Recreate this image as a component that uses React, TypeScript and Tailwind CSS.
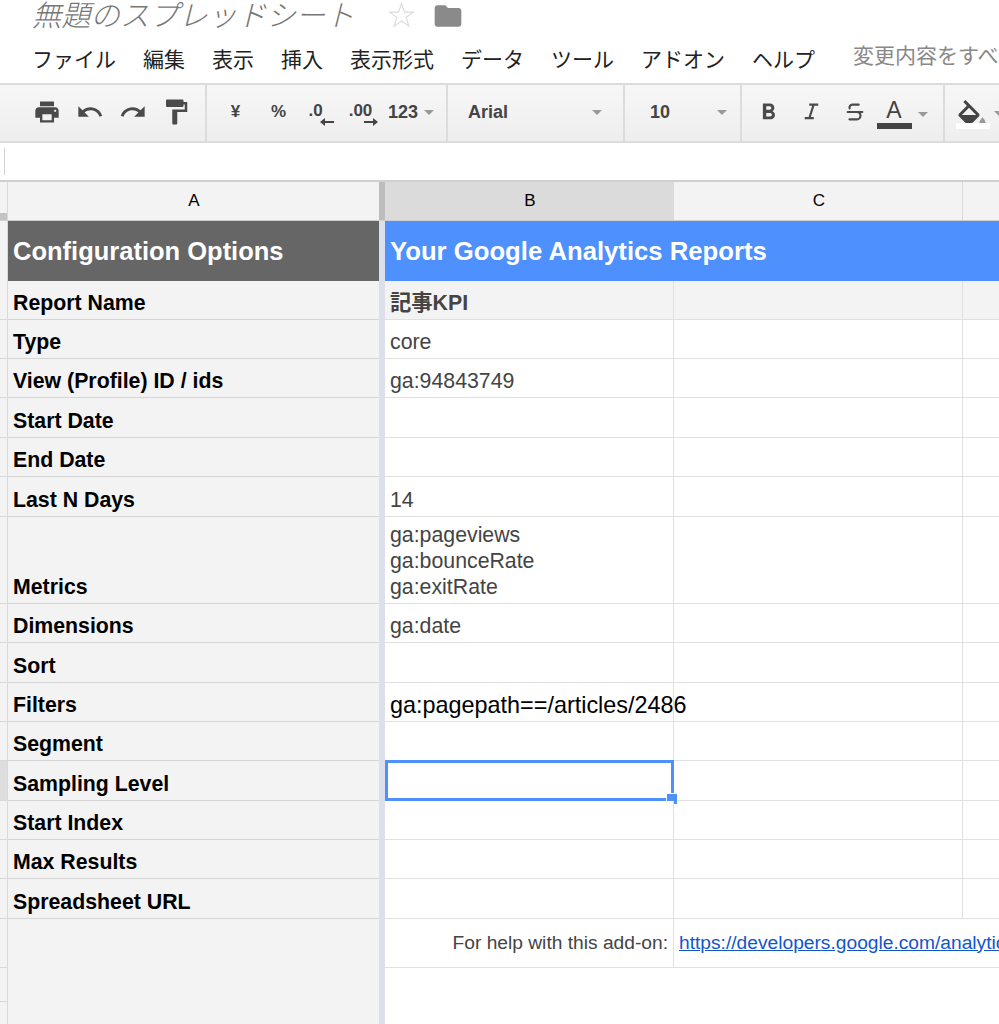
import React from "react";
import { Strikethrough } from "lucide-react";

const ICONS: Record<string, string> = {
  print: "M19 8H5c-1.66 0-3 1.34-3 3v6h4v4h12v-4h4v-6c0-1.66-1.34-3-3-3zm-3 11H8v-5h8v5zm3-7c-.55 0-1-.45-1-1s.45-1 1-1 1 .45 1 1-.45 1-1 1zm-1-9H6v4h12V3z",
  undo: "M12.5 8c-2.65 0-5.05.99-6.9 2.6L2 7v9h9l-3.62-3.62c1.39-1.16 3.16-1.88 5.12-1.88 3.54 0 6.55 2.31 7.6 5.5l2.37-.78C21.08 11.03 17.15 8 12.5 8z",
  redo: "M18.4 10.6C16.55 8.99 14.15 8 11.5 8c-4.65 0-8.58 3.03-9.96 7.22L3.9 16c1.05-3.19 4.05-5.5 7.6-5.5 1.95 0 3.73.72 5.12 1.88L13 16h9V7l-3.6 3.6z",
  roller: "M18 4V3c0-.55-.45-1-1-1H5c-.55 0-1 .45-1 1v4c0 .55.45 1 1 1h12c.55 0 1-.45 1-1V6h1v4H9v11c0 .55.45 1 1 1h2c.55 0 1-.45 1-1v-9h8V4h-3z",
  folder: "M10 4H4c-1.1 0-2 .9-2 2v12c0 1.1.9 2 2 2h16c1.1 0 2-.9 2-2V8c0-1.1-.9-2-2-2h-8l-2-2z",
  bold: "M15.6 10.79c.97-.67 1.65-1.77 1.65-2.79 0-2.26-1.75-4-4-4H7v14h7.04c2.09 0 3.71-1.7 3.71-3.79 0-1.52-.86-2.82-2.15-3.42zM10 6.5h3c.83 0 1.5.67 1.5 1.5s-.67 1.5-1.5 1.5h-3v-3zm3.500 9H10v-3h3.500c.83 0 1.500.67 1.500 1.500s-.67 1.500-1.500 1.500z",
  italic: "M10 4v2h2.6l-3.2 10H6v2h8v-2h-2.6l3.2-10H18V4z",
  bucket: "M16.56 8.94L7.62 0 6.21 1.41l2.38 2.38-5.15 5.15c-.59.59-.59 1.54 0 2.12l5.5 5.5c.29.29.68.44 1.06.44s.77-.15 1.06-.44l5.5-5.5c.59-.58.59-1.53 0-2.12zM5.21 10L10 5.21 14.79 10H5.21z",
};

const Icon = ({ name, size = 28 }: { name: string; size?: number }) => (
  <svg width={size} height={size} viewBox="0 0 24 24" fill="#4a4a4a">
    <path d={ICONS[name]} />
  </svg>
);

const Caret = () => <span className="w-0 h-0 border-x-[5px] border-x-transparent border-t-[5px] border-t-[#999]" />;

const Tool = ({ w = "w-[43px]", children }: { w?: string; children: React.ReactNode }) => (
  <div className={`${w} h-full flex items-center justify-center shrink-0`}>{children}</div>
);

const Decimal = ({ label, dir }: { label: string; dir: "left" | "right" }) => (
  <div className={`relative font-bold text-[17px] text-[#444] leading-none -mt-[4px] ${dir === "left" ? "mr-[12px]" : "mr-[8px]"}`}>
    {label}
    <svg className={`absolute top-[15px] ${dir === "left" ? "right-[-11px]" : "right-[-6px]"}`} width="14" height="10" viewBox="0 0 14 10" fill="#444">
      {dir === "left" ? <path d="M0 5l5-4v3h9v2H5v3z" /> : <path d="M14 5L9 1v3H0v2h9v3z" />}
    </svg>
  </div>
);

type Row = { label: string; h: string; value?: string; kind?: string };

const rows: Row[] = [
  { label: "Report Name", h: "h-[39px]", value: "記事KPI", kind: "name" },
  { label: "Type", h: "h-[39px]", value: "core" },
  { label: "View (Profile) ID / ids", h: "h-[39px]", value: "ga:94843749" },
  { label: "Start Date", h: "h-[40px]" },
  { label: "End Date", h: "h-[39px]" },
  { label: "Last N Days", h: "h-[40px]", value: "14" },
  { label: "Metrics", h: "h-[87px]", kind: "metrics" },
  { label: "Dimensions", h: "h-[39px]", value: "ga:date" },
  { label: "Sort", h: "h-[40px]" },
  { label: "Filters", h: "h-[39px]", kind: "filters" },
  { label: "Segment", h: "h-[39px]" },
  { label: "Sampling Level", h: "h-[40px]", kind: "selected" },
  { label: "Start Index", h: "h-[39px]" },
  { label: "Max Results", h: "h-[39px]" },
  { label: "Spreadsheet URL", h: "h-[40px]" },
];

const SheetRow = ({ row }: { row: Row }) => {
  const shaded = row.kind === "name";
  const bCell = shaded ? "bg-[#f3f3f3] font-bold text-[#444]" : "bg-white text-[#444]";
  return (
    <div className={`flex ${row.h}`}>
      <div className={`w-[8px] shrink-0 border-b border-[#d9d9d9] border-r ${row.kind === "selected" ? "bg-[#dddddd]" : "bg-[#f3f3f3]"}`} />
      <div className="w-[371px] shrink-0 bg-[#f3f3f3] border-b border-[#d5d5d5] flex items-end pl-[5px] pb-[3px] font-bold text-[21.3px] leading-[26px] text-black">
        {row.label}
      </div>
      <div className="w-[6px] shrink-0 bg-[#dde0ea]" />
      <div className={`relative w-[289px] shrink-0 border-b border-r border-[#e0e0e0] flex items-end pl-[5px] pb-[3px] text-[21.3px] leading-[26px] whitespace-nowrap ${bCell}`}>
        {row.kind === "metrics" ? (
          <div>
            <div>ga:pageviews</div>
            <div>ga:bounceRate</div>
            <div>ga:exitRate</div>
          </div>
        ) : row.kind === "filters" ? (
          <span className="text-black text-[23.4px]">ga:pagepath==/articles/2486</span>
        ) : (
          <span>{row.value}</span>
        )}
        {row.kind === "selected" && (
          <div className="absolute left-0 top-[-1px] w-[289px] h-[41px] border-[3px] border-[#4d90fe]">
            <div className="absolute right-[-6px] bottom-[-6px] w-[10px] h-[10px] bg-[#4d90fe] outline outline-1 outline-white" />
          </div>
        )}
      </div>
      <div className={`w-[289px] shrink-0 border-b border-r border-[#e0e0e0] ${shaded ? "bg-[#f3f3f3]" : "bg-white"}`} />
      <div className={`flex-1 border-b border-[#e0e0e0] ${shaded ? "bg-[#f3f3f3]" : "bg-white"}`} />
    </div>
  );
};

export default function App() {
  return (
    <div className="w-[999px] h-[1024px] overflow-hidden bg-white relative" style={{ fontFamily: "'Liberation Sans','Noto Sans CJK JP',sans-serif" }}>
      {/* title */}
      <div className="h-[31px] flex items-center pl-[32px]">
        <span className="italic text-[29.3px] leading-none font-light text-[#777] whitespace-nowrap">無題のスプレッドシート</span>
        <svg className="ml-[34px]" width="27" height="27" viewBox="0 0 24 24" fill="none" stroke="#dcdcdc" strokeWidth="1">
          <polygon points="12,1.500 14.700,9 22.500,9 16.200,13.800 18.500,21.500 12,16.900 5.500,21.500 7.800,13.800 1.500,9 9.300,9" />
        </svg>
        <span className="ml-[17px]"><svg width="32" height="32" viewBox="0 0 24 24" fill="#8a8a8a"><path d={ICONS.folder} /></svg></span>
      </div>
      {/* menu */}
      <div className="h-[52px] flex items-center pt-[6px] pl-[32px] text-[21px] text-[#222] whitespace-nowrap">
        <span className="mr-[27px]">ファイル</span>
        <span className="mr-[27px]">編集</span>
        <span className="mr-[27px]">表示</span>
        <span className="mr-[27px]">挿入</span>
        <span className="mr-[27px]">表示形式</span>
        <span className="mr-[27px]">データ</span>
        <span className="mr-[27px]">ツール</span>
        <span className="mr-[27px]">アドオン</span>
        <span>ヘルプ</span>
        <span className="ml-[38px] text-[#888] -mt-[8px]">変更内容をすべて保存しました</span>
      </div>
      {/* toolbar */}
      <div className="h-[60px] flex border-y-2 border-[#dcdcdc] bg-gradient-to-b from-[#f7f7f7] to-[#eeeeee] text-[#444]">
        <div className="w-[207px] shrink-0 border-r-2 border-[#dcdcdc] flex pl-[25px] pb-[2px]">
          <Tool><Icon name="print" /></Tool>
          <Tool><Icon name="undo" /></Tool>
          <Tool><Icon name="redo" /></Tool>
          <Tool><Icon name="roller" size={30} /></Tool>
        </div>
        <div className="w-[241px] shrink-0 border-r-2 border-[#dcdcdc] flex pl-[7px] pb-[2px] font-bold text-[17px]">
          <Tool>¥</Tool>
          <Tool>%</Tool>
          <Tool><Decimal label=".0" dir="left" /></Tool>
          <Tool><Decimal label=".00" dir="right" /></Tool>
          <div className="flex items-center gap-[6px] ml-[2px] text-[18px]">123 <Caret /></div>
        </div>
        <div className="w-[177px] shrink-0 border-r-2 border-[#dcdcdc] flex items-center justify-between pl-[20px] pr-[21px] pb-[2px] font-bold text-[18px]">
          Arial <Caret />
        </div>
        <div className="w-[117px] shrink-0 border-r-2 border-[#dcdcdc] flex items-center justify-between pl-[25px] pr-[13px] pb-[2px] font-bold text-[18px]">
          10 <Caret />
        </div>
        <div className="w-[203px] shrink-0 border-r-2 border-[#dcdcdc] flex pl-[5px] pb-[2px]">
          <Tool><Icon name="bold" size={27} /></Tool>
          <Tool><Icon name="italic" size={27} /></Tool>
          <Tool><Strikethrough size={22} strokeWidth={2.4} color="#4a4a4a" /></Tool>
          <div className="flex flex-col items-center w-[36px] mt-[13px] text-[23px] leading-[24px]">
            A
            <div className="w-[35px] h-[6px] bg-[#444] mt-[1px]" />
          </div>
          <div className="flex items-center ml-[6px] mt-[4px]"><Caret /></div>
        </div>
        <div className="flex-1 relative flex pl-[9px] pt-[15px]">
          <svg className="block" width="36" height="27" viewBox="0 0 24 18" fill="#444">
            <path d={ICONS.bucket} />
            <path d="M19 11.5s-2 2.17-2 3.5c0 1.1.9 2 2 2s2-.9 2-2c0-1.33-2-3.5-2-3.5z" fill="#999" />
          </svg>
          <div className="absolute left-[11px] top-[38px] w-[34px] h-[6px] bg-white" />
          <div className="absolute left-[49px] top-[28px]"><Caret /></div>
        </div>
      </div>
      {/* formula bar */}
      <div className="h-[39px] bg-white pl-[4px] pt-[5px] border-b-2 border-[#d0d0d0]">
        <div className="w-px h-[27px] bg-[#d0d0d0]" />
      </div>
      {/* column headers */}
      <div className="flex h-[39px] text-[17px] text-black border-b border-[#cfcfcf]">
        <div className="w-[8px] shrink-0 bg-[#f3f3f3] border-r border-[#d9d9d9] flex items-end"><div className="w-full h-[7px] bg-[#c4c4c4]" /></div>
        <div className="w-[371px] shrink-0 bg-[#f3f3f3] flex items-center justify-center pl-[1px]">A</div>
        <div className="w-[6px] shrink-0 bg-[#bdbdbd]" />
        <div className="w-[289px] shrink-0 bg-[#dbdbdb] border-r border-[#d9d9d9] flex items-center justify-center pl-[2px]">B</div>
        <div className="w-[289px] shrink-0 bg-[#f3f3f3] border-r border-[#d9d9d9] flex items-center justify-center pl-[2px]">C</div>
        <div className="flex-1 bg-[#f3f3f3]" />
      </div>
      {/* banner row */}
      <div className="flex h-[60px] font-bold text-white">
        <div className="w-[8px] shrink-0 bg-[#f3f3f3] border-r border-[#d9d9d9]" />
        <div className="w-[371px] shrink-0 bg-[#666666] flex items-center pl-[5px] text-[25.5px]">Configuration Options</div>
        <div className="w-[6px] shrink-0 bg-[#dde0ea]" />
        <div className="flex-1 bg-[#4d90fe] flex items-center pl-[5px] text-[25.7px]">Your Google Analytics Reports</div>
      </div>
      {rows.map((row) => (
        <SheetRow key={row.label} row={row} />
      ))}
      {/* help row */}
      <div className="flex h-[49px]">
        <div className="w-[8px] shrink-0 bg-[#f3f3f3] border-r border-b border-[#d9d9d9]" />
        <div className="w-[371px] shrink-0 bg-[#f3f3f3]" />
        <div className="w-[6px] shrink-0 bg-[#dde0ea]" />
        <div className="w-[289px] shrink-0 bg-white border-b border-r border-[#e0e0e0] flex items-center justify-end pr-[5px] text-[19.2px] text-[#444]">
          For help with this add-on:
        </div>
        <div className="flex-1 bg-white border-b border-[#e0e0e0] flex items-center pl-[5px] text-[19.2px] text-[#1155cc] underline whitespace-nowrap overflow-hidden">
          https://developers.google.com/analytics/
        </div>
      </div>
      <div className="flex h-[60px]">
        <div className="w-[8px] shrink-0 bg-[#f3f3f3] border-r border-[#d9d9d9]">
          <div className="h-[34px] border-b border-[#d9d9d9]" />
        </div>
        <div className="w-[371px] shrink-0 bg-[#f3f3f3]" />
        <div className="w-[6px] shrink-0 bg-[#dde0ea]" />
        <div className="flex-1 bg-white" />
      </div>
    </div>
  );
}
